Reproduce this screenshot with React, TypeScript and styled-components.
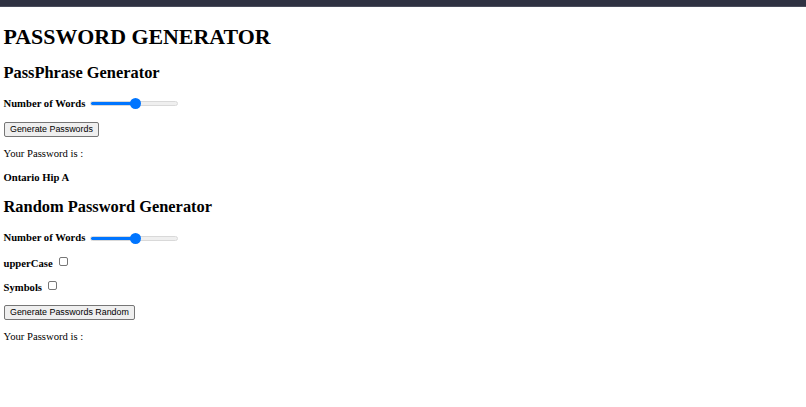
import React, { useState } from "react";
import styled, { createGlobalStyle } from "styled-components";

const S = 2 / 3;

const Global = createGlobalStyle`
  html, body { margin: 0; padding: 0; background: #ffffff; }
  body { font-family: "Liberation Serif", "Times New Roman", serif; color: #000; }
`;

const TopBar = styled.div`
  height: 6px;
  background: #2f3242;
  border-bottom: 1px solid #4a4d5c;
`;

const Page = styled.main`
  padding: 0 3.5px;
  font-size: ${16 * S}px;
  display: flow-root;
`;

const Title = styled.h1`
  font-size: 21.9px;
  line-height: 25px;
  font-weight: bold;
  margin: ${21.44 * S + 3}px 0 ${21.44 * S}px;
`;

const Section = styled.h2`
  font-size: 16.4px;
  line-height: 18.4px;
  font-weight: bold;
  margin: ${19.92 * S}px 0;
`;

const Row = styled.p<{ $tall?: boolean }>`
  margin: ${16 * S}px 0;
  display: flex;
  align-items: center;
  gap: 3px;
  line-height: 13.5px;
  min-height: ${(p) => (p.$tall ? 16.5 : 13.5)}px;
`;

const Label = styled.b`
  font-weight: bold;
`;

const Range = styled.input.attrs({ type: "range" })`
  width: 88px;
  height: 11px;
  margin: 0 0 0 2px;
  -webkit-appearance: none;
  appearance: none;
  background: transparent;
  &::-webkit-slider-runnable-track {
    height: 5px;
    border-radius: 3px;
    background: linear-gradient(
      to right,
      #0075ff 0,
      #0075ff var(--fill),
      #efefef var(--fill),
      #efefef 100%
    );
    border: 1px solid #d9d9d9;
  }
  &::-webkit-slider-thumb {
    -webkit-appearance: none;
    width: 11px;
    height: 11px;
    border-radius: 50%;
    background: #0075ff;
    margin-top: -4px;
    border: none;
  }
`;

const Check = styled.input.attrs({ type: "checkbox" })`
  -webkit-appearance: none;
  appearance: none;
  width: 9px;
  height: 9px;
  margin: 0 3px;
  border: 1px solid #767676;
  border-radius: 2px;
  background: #fff;
  position: relative;
  top: -2px;
`;

const Button = styled.button`
  font-family: "Liberation Sans", Arial, sans-serif;
  font-size: ${13.33 * S}px;
  padding: 1px 5.5px;
  background: #efefef;
  border: 1px solid #767676;
  border-radius: 2px;
  color: #000;
  line-height: 1.15;
`;

const ButtonRow = styled.div`
  display: flex;
  margin: 0;
`;

function Slider() {
  const [v, setV] = useState(52);
  return (
    <Range
      min={0}
      max={100}
      value={v}
      onChange={(e) => setV(Number(e.target.value))}
      style={{ ["--fill" as any]: `${v}%` }}
    />
  );
}

export default function App() {
  return (
    <>
      <Global />
      <TopBar />
      <Page>
        <Title>PASSWORD GENERATOR</Title>
        <Section>PassPhrase Generator</Section>
        <Row $tall>
          <Label>Number of Words</Label>
          <Slider />
        </Row>
        <ButtonRow>
          <Button>Generate Passwords</Button>
        </ButtonRow>
        <Row>Your Password is :</Row>
        <Row>
          <Label>Ontario Hip A</Label>
        </Row>
        <Section>Random Password Generator</Section>
        <Row $tall>
          <Label>Number of Words</Label>
          <Slider />
        </Row>
        <Row>
          <Label>upperCase</Label>
          <Check />
        </Row>
        <Row>
          <Label>Symbols</Label>
          <Check />
        </Row>
        <ButtonRow>
          <Button>Generate Passwords Random</Button>
        </ButtonRow>
        <Row>Your Password is :</Row>
      </Page>
    </>
  );
}
